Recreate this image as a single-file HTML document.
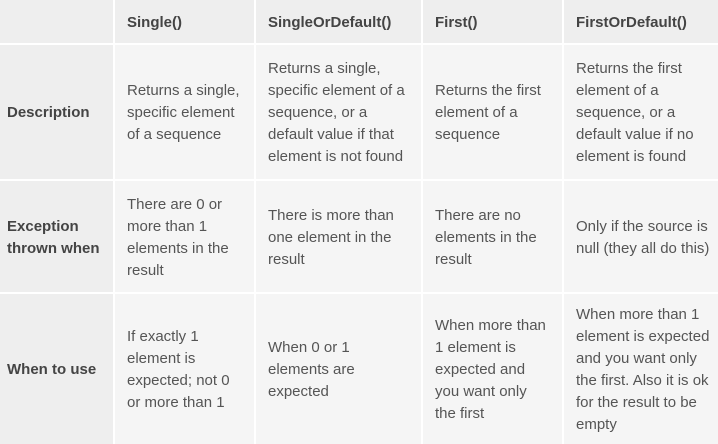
<!DOCTYPE html>
<html><head><style>
html,body{margin:0;padding:0;background:#fff;}
table{border-collapse:collapse;width:718px;height:444px;font-family:"Liberation Sans",Arial,sans-serif;font-size:15px;line-height:22px;color:#555;table-layout:fixed;}
td,th{border:2px solid #fff;padding:2px 12px 0;vertical-align:middle;text-align:left;background:#f5f5f5;}
th{background:#eeeeee;font-weight:bold;color:#444;}
tr:first-child th,tr:first-child td{border-top:0}
td:first-child,th:first-child{border-left:0;padding-left:7px;}
tr:last-child td,tr:last-child th{border-bottom:0}
td:last-child,th:last-child{border-right:0;white-space:nowrap;padding-right:0}
</style></head><body>
<table>
<colgroup><col style="width:114px"><col style="width:141px"><col style="width:167px"><col style="width:141px"><col style="width:155px"></colgroup>
<tr style="height:44px"><th></th><th>Single()</th><th>SingleOrDefault()</th><th>First()</th><th>FirstOrDefault()</th></tr>
<tr style="height:136px"><th>Description</th><td>Returns a single, specific element of a sequence</td><td>Returns a single, specific element of a sequence, or a default value if that element is not found</td><td>Returns the first element of a sequence</td><td>Returns the first<br>element of a<br>sequence, or a<br>default value if no<br>element is found</td></tr>
<tr style="height:113px"><th>Exception thrown when</th><td>There are 0 or more than 1 elements in the result</td><td>There is more than one element in the result</td><td>There are no elements in the result</td><td>Only if the source is<br>null (they all do this)</td></tr>
<tr style="height:151px"><th>When to use</th><td>If exactly 1 element is expected; not 0 or more than 1</td><td>When 0 or 1 elements are expected</td><td>When more than 1 element is expected and you want only the first</td><td>When more than 1<br>element is expected<br>and you want only<br>the first. Also it is ok<br>for the result to be<br>empty</td></tr>
</table>
</body></html>
